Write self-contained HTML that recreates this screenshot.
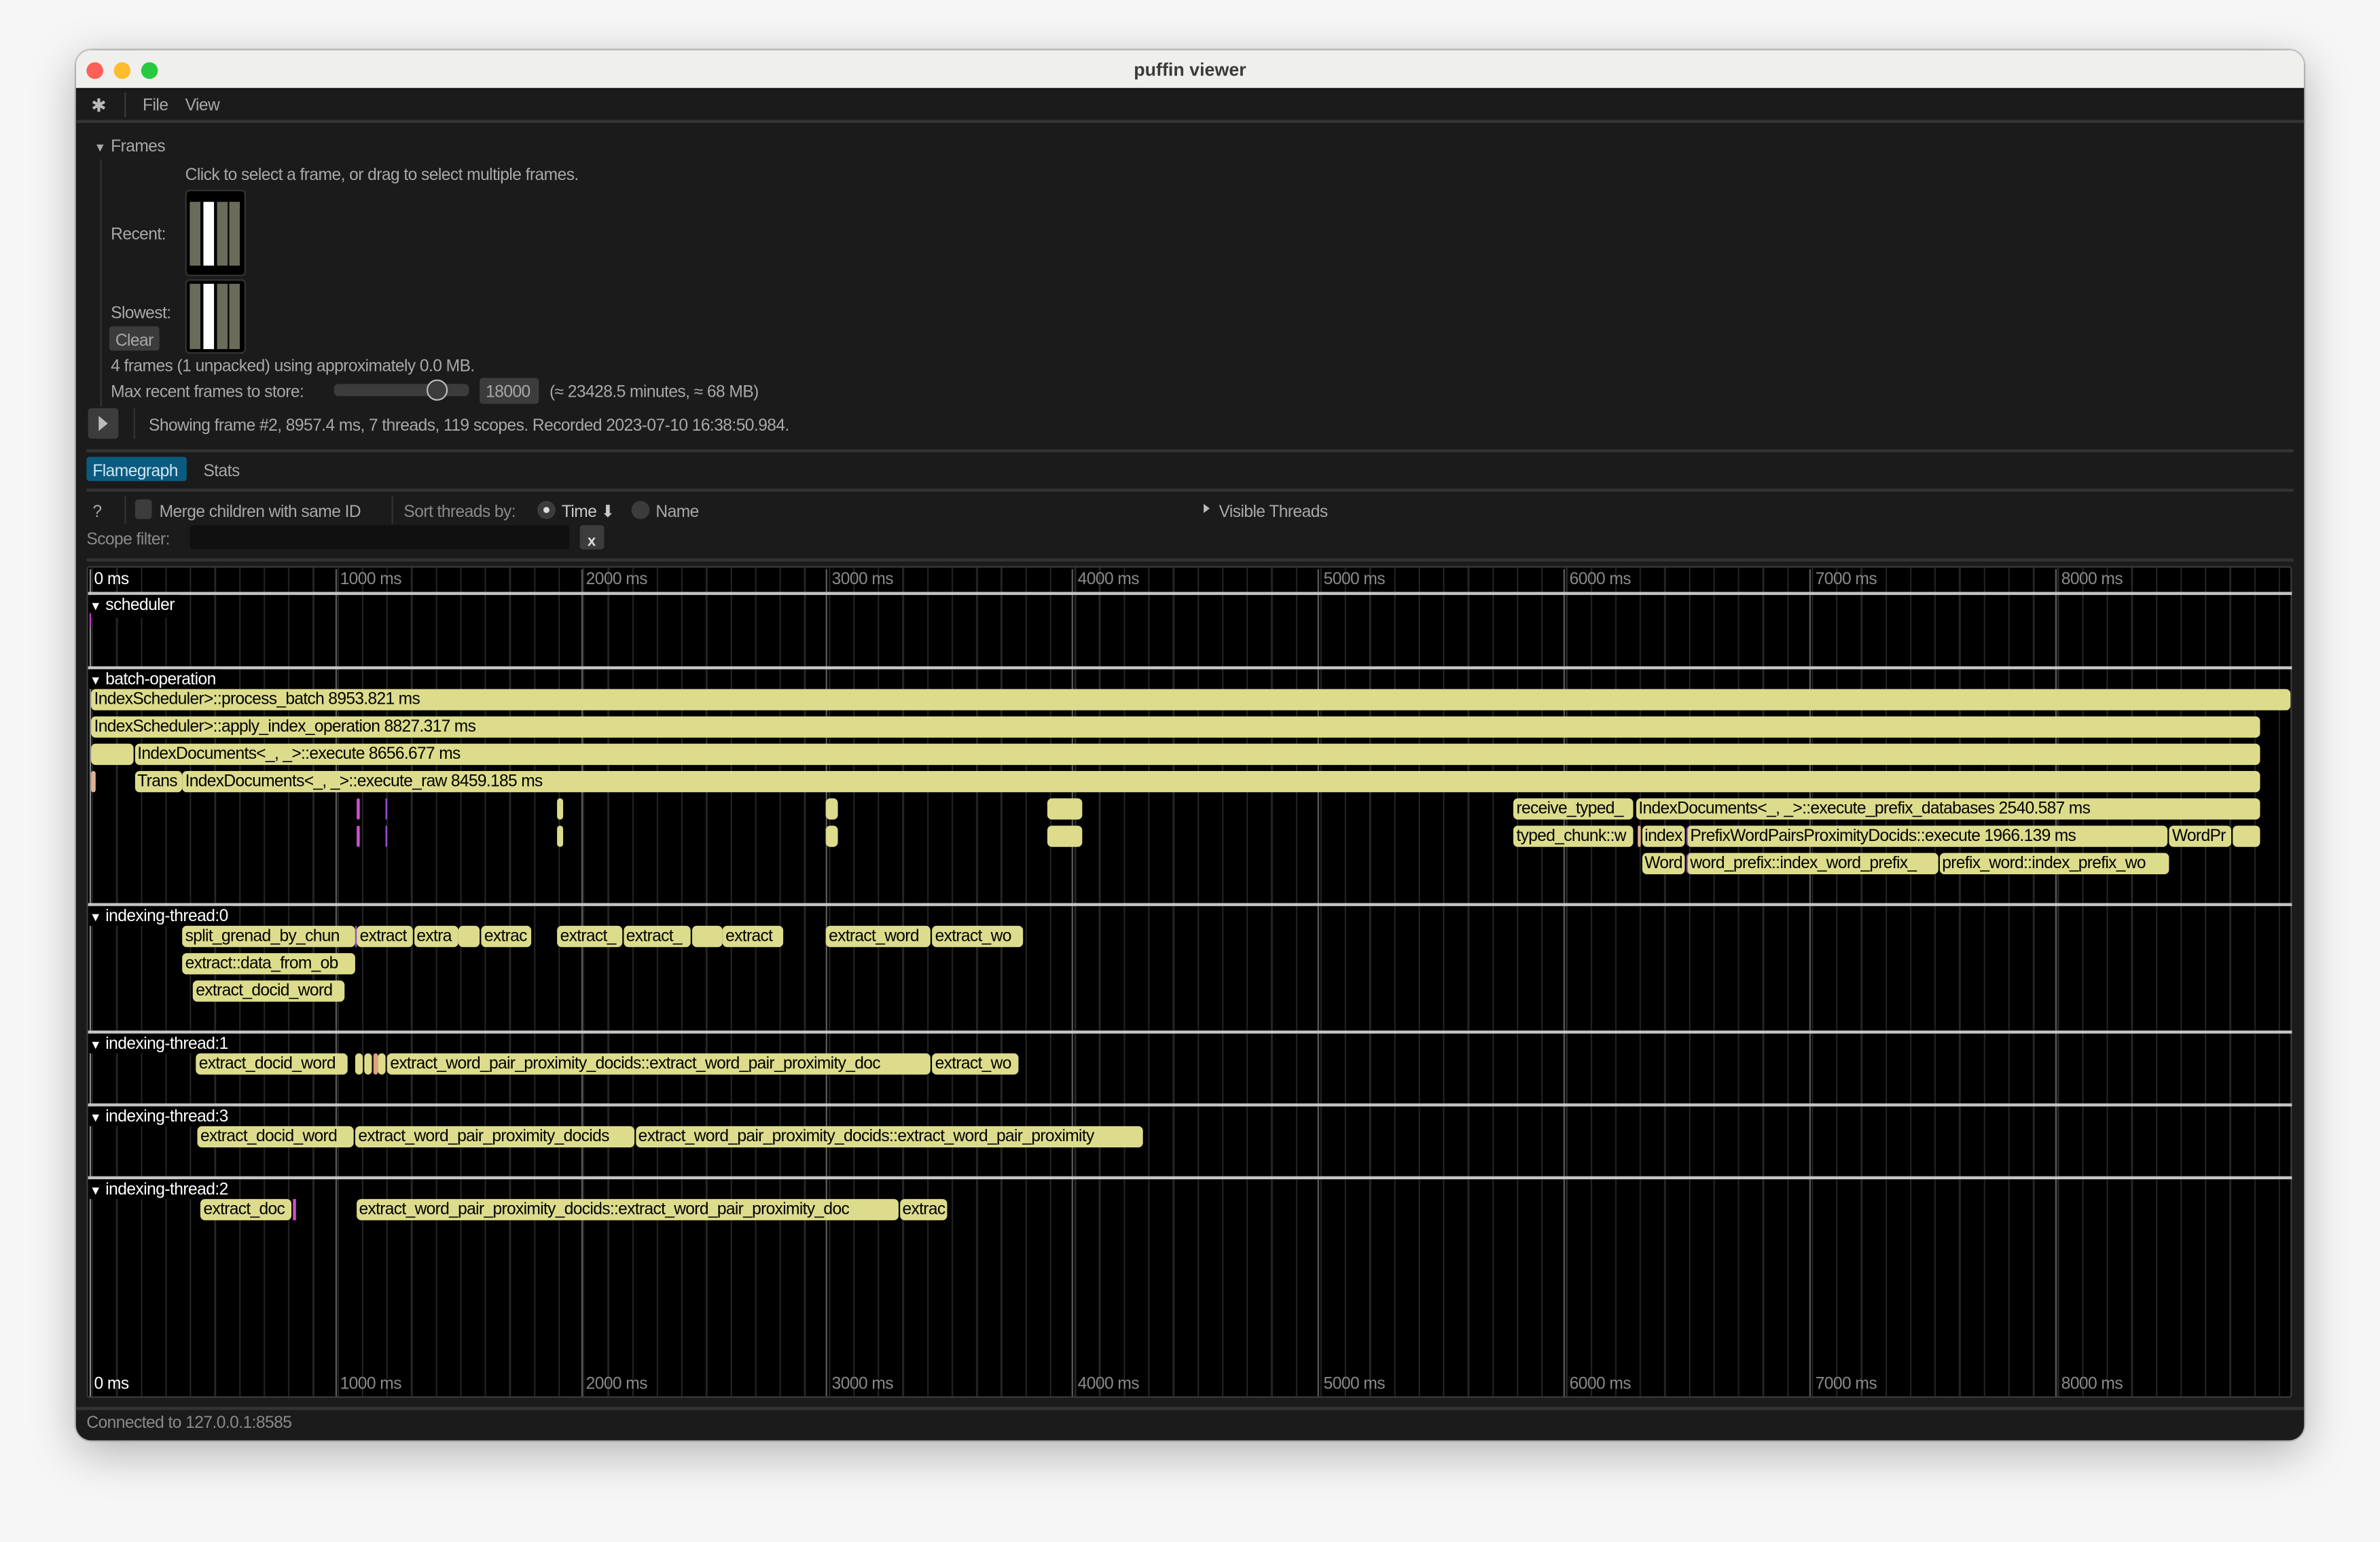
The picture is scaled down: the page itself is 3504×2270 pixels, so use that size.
<!DOCTYPE html>
<html><head><meta charset="utf-8"><style>
html,body{margin:0;padding:0;width:3504px;height:2270px;overflow:hidden;background:#f6f6f6}
#w{position:absolute;left:0;top:0;width:1568px;height:1016px;transform:scale(2.23469,2.2343);transform-origin:0 0;font-family:"Liberation Sans",sans-serif;font-size:11px;color:#a8a8a8}
.a{position:absolute;white-space:nowrap}
.win{position:absolute;left:50px;top:33px;width:1468px;height:916px;border-radius:10px;background:#1b1b1b;overflow:hidden;box-shadow:0 8px 30px rgba(0,0,0,.28),0 0 0 1px rgba(0,0,0,.15)}
.tb{position:absolute;left:0;top:0;width:1468px;height:25px;background:#efefed;border-bottom:1px solid #000}
.hl{position:absolute;height:1px;background:#3a3a3a}
.t{position:absolute;white-space:nowrap;line-height:13px;transform:translateY(-5.3px);letter-spacing:-.25px}
.b{position:absolute;height:14px;background:#dcdc8c;border-radius:3px;color:#000;font-size:11px;line-height:15px;padding-left:2px;overflow:hidden;white-space:nowrap;box-sizing:border-box;letter-spacing:-.3px}
.sep{position:absolute;left:58px;width:1452px;height:1.5px;background:#c4c4c4}
.ml{position:absolute;top:375px;width:1px;height:545px;background:#5a5a5a}
.lb{position:absolute;background:#000;color:#fff;height:13px;line-height:15px;padding-right:4px;letter-spacing:-.25px}
.ax{position:absolute;color:#8a8a8a;letter-spacing:-.25px;line-height:13px}
</style></head><body><div id="w">
<div class="win">
 <div class="tb">
  <div class="a" style="left:7px;top:8px;width:11px;height:11px;border-radius:50%;background:#fe5f57"></div>
  <div class="a" style="left:25px;top:8px;width:11px;height:11px;border-radius:50%;background:#febc2e"></div>
  <div class="a" style="left:43px;top:8px;width:11px;height:11px;border-radius:50%;background:#28c840"></div>
  <div class="a" style="left:0;width:1468px;top:6px;text-align:center;font-weight:bold;font-size:12px;color:#3a3a3a">puffin viewer</div>
 </div>
</div>
<div class="t" style="left:60px;top:69px;color:#bbb;font-size:12px">✱</div>
<div class="a" style="left:82px;top:61px;width:1px;height:16px;background:#3a3a3a"></div>
<div class="t" style="left:94px;top:69px">File</div>
<div class="t" style="left:122px;top:69px">View</div>
<div class="hl" style="left:50px;top:79px;width:1468px;height:1.5px;background:#333"></div>
<div class="t" style="left:62px;top:96px;font-size:8px">▼</div>
<div class="t" style="left:73px;top:96px">Frames</div>
<div class="a" style="left:66px;top:105px;width:1px;height:163px;background:#333"></div>
<div class="t" style="left:122px;top:115px">Click to select a frame, or drag to select multiple frames.</div>
<div class="t" style="left:73px;top:154px">Recent:</div>
<div class="a" style="left:123px;top:126px;width:38px;height:55px;background:#000;border-radius:2px;box-shadow:0 0 0 1px #333"></div>
<div class="a" style="left:125px;top:133px;width:7px;height:42px;background:#6b6b5a"></div>
<div class="a" style="left:134px;top:133px;width:7px;height:42px;background:#fff"></div>
<div class="a" style="left:143px;top:133px;width:7px;height:42px;background:#6b6b5a"></div>
<div class="a" style="left:151px;top:133px;width:7px;height:42px;background:#6b6b5a"></div>
<div class="t" style="left:73px;top:206px">Slowest:</div>
<div class="a" style="left:123px;top:185px;width:38px;height:47px;background:#000;border-radius:2px;box-shadow:0 0 0 1px #333"></div>
<div class="a" style="left:125px;top:187px;width:7px;height:43px;background:#6b6b5a"></div>
<div class="a" style="left:134px;top:187px;width:7px;height:43px;background:#fff"></div>
<div class="a" style="left:143px;top:187px;width:7px;height:43px;background:#6b6b5a"></div>
<div class="a" style="left:151px;top:187px;width:7px;height:43px;background:#6b6b5a"></div>
<div class="a" style="left:72px;top:215px;width:33px;height:16px;background:#3c3c3c;border-radius:2px"></div>
<div class="t" style="left:76px;top:224px">Clear</div>
<div class="t" style="left:73px;top:241px">4 frames (1 unpacked) using approximately 0.0 MB.</div>
<div class="t" style="left:73px;top:258px">Max recent frames to store:</div>
<div class="a" style="left:220px;top:253px;width:89px;height:8px;background:#3c3c3c;border-radius:3px"></div>
<div class="a" style="left:281px;top:250px;width:12px;height:12px;border-radius:50%;background:#3c3c3c;border:1px solid #bbb"></div>
<div class="a" style="left:316px;top:249px;width:39px;height:17px;background:#3c3c3c;border-radius:2px"></div>
<div class="t" style="left:320px;top:258px">18000</div>
<div class="t" style="left:362px;top:258px">(≈ 23428.5 minutes, ≈ 68 MB)</div>
<div class="a" style="left:58px;top:269px;width:20px;height:20px;background:#3c3c3c;border-radius:2px"></div>
<div class="a" style="left:65px;top:274px;width:0;height:0;border-left:6px solid #bbb;border-top:5px solid transparent;border-bottom:5px solid transparent"></div>
<div class="a" style="left:88px;top:269px;width:1px;height:20px;background:#333"></div>
<div class="t" style="left:98px;top:280px">Showing frame #2, 8957.4 ms, 7 threads, 119 scopes. Recorded 2023-07-10 16:38:50.984.</div>
<div class="hl" style="left:57px;top:296px;width:1454px;height:1.5px;background:#333"></div>
<div class="a" style="left:57px;top:301px;width:66px;height:16px;background:#0b5a80;border-radius:2px"></div>
<div class="t" style="left:61px;top:310px;color:#cfe6f3">Flamegraph</div>
<div class="t" style="left:134px;top:310px">Stats</div>
<div class="hl" style="left:57px;top:322px;width:1454px;height:1.5px;background:#333"></div>
<div class="t" style="left:61px;top:337px">?</div>
<div class="a" style="left:82px;top:327px;width:1px;height:18px;background:#333"></div>
<div class="a" style="left:89px;top:329px;width:11px;height:13px;background:#3c3c3c;border-radius:2px"></div>
<div class="t" style="left:105px;top:337px">Merge children with same ID</div>
<div class="a" style="left:258px;top:327px;width:1px;height:18px;background:#333"></div>
<div class="t" style="left:266px;top:337px;color:#8a8a8a">Sort threads by:</div>
<div class="a" style="left:354px;top:330px;width:12px;height:12px;border-radius:50%;background:#3c3c3c"></div>
<div class="a" style="left:358px;top:334px;width:4px;height:4px;border-radius:50%;background:#ddd"></div>
<div class="t" style="left:370px;top:337px;color:#c8c8c8">Time ⬇</div>
<div class="a" style="left:416px;top:330px;width:12px;height:12px;border-radius:50%;background:#3c3c3c"></div>
<div class="t" style="left:432px;top:337px">Name</div>
<div class="a" style="left:793px;top:332px;width:0;height:0;border-left:4px solid #bbb;border-top:3px solid transparent;border-bottom:3px solid transparent"></div>
<div class="t" style="left:803px;top:337px">Visible Threads</div>
<div class="t" style="left:57px;top:355px;color:#8a8a8a">Scope filter:</div>
<div class="a" style="left:125px;top:346px;width:250px;height:16px;background:#101010;border-radius:2px"></div>
<div class="a" style="left:382px;top:346px;width:16px;height:16px;background:#3c3c3c;border-radius:2px"></div>
<div class="t" style="left:387px;top:356px;color:#ddd;font-weight:bold;font-size:10px">x</div>
<div class="hl" style="left:57px;top:368px;width:1454px;height:1.5px;background:#333"></div>
<div class="a" style="left:57px;top:373px;width:1453px;height:548px;background:#000;border:1px solid #3a3a3a;border-radius:2px;box-sizing:border-box;background-image:repeating-linear-gradient(to right,#262626 0 1px,transparent 1px 16.19px);background-position:2.3px 0"></div>
<div class="ml" style="left:59.3px;background:#888"></div><div class="ml" style="left:220.7px"></div><div class="ml" style="left:382.5px"></div><div class="ml" style="left:544.4px"></div><div class="ml" style="left:706.3px"></div><div class="ml" style="left:868.2px"></div><div class="ml" style="left:1030px"></div><div class="ml" style="left:1192px"></div><div class="ml" style="left:1354px"></div>
<div class="ax" style="left:62px;top:376px;color:#fff">0 ms</div>
<div class="ax" style="left:224px;top:376px">1000 ms</div><div class="ax" style="left:386px;top:376px">2000 ms</div><div class="ax" style="left:548px;top:376px">3000 ms</div><div class="ax" style="left:710px;top:376px">4000 ms</div><div class="ax" style="left:872px;top:376px">5000 ms</div><div class="ax" style="left:1034px;top:376px">6000 ms</div><div class="ax" style="left:1196px;top:376px">7000 ms</div><div class="ax" style="left:1358px;top:376px">8000 ms</div>
<div class="ax" style="left:62px;top:906px;color:#fff">0 ms</div>
<div class="ax" style="left:224px;top:906px">1000 ms</div><div class="ax" style="left:386px;top:906px">2000 ms</div><div class="ax" style="left:548px;top:906px">3000 ms</div><div class="ax" style="left:710px;top:906px">4000 ms</div><div class="ax" style="left:872px;top:906px">5000 ms</div><div class="ax" style="left:1034px;top:906px">6000 ms</div><div class="ax" style="left:1196px;top:906px">7000 ms</div><div class="ax" style="left:1358px;top:906px">8000 ms</div>
<div class="sep" style="top:390px"></div><div class="sep" style="top:439px"></div><div class="sep" style="top:595px"></div><div class="sep" style="top:679px"></div><div class="sep" style="top:727px"></div><div class="sep" style="top:775px"></div>
<div class="lb" style="left:59px;top:392px;height:15px"><span style="font-size:8px">▼</span> scheduler</div>
<div class="a" style="left:59px;top:404px;width:1px;height:9px;background:#c040c0"></div>
<div class="lb" style="left:59px;top:441px"><span style="font-size:8px">▼</span> batch-operation</div>
<div class="lb" style="left:59px;top:597px"><span style="font-size:8px">▼</span> indexing-thread:0</div>
<div class="lb" style="left:59px;top:681px"><span style="font-size:8px">▼</span> indexing-thread:1</div>
<div class="lb" style="left:59px;top:729px"><span style="font-size:8px">▼</span> indexing-thread:3</div>
<div class="lb" style="left:59px;top:777px"><span style="font-size:8px">▼</span> indexing-thread:2</div>
<div class="b" style="left:60px;top:454px;width:1449px">IndexScheduler&gt;::process_batch 8953.821 ms</div>
<div class="b" style="left:60px;top:472px;width:1429px">IndexScheduler&gt;::apply_index_operation 8827.317 ms</div>
<div class="b" style="left:60px;top:490px;width:28px"></div>
<div class="b" style="left:88.5px;top:490px;width:1400.5px">IndexDocuments&lt;_, _&gt;::execute 8656.677 ms</div>
<div class="b" style="left:60px;top:508px;width:3px;background:#e0b090;padding:0"></div>
<div class="b" style="left:88.5px;top:508px;width:31px">Trans</div>
<div class="b" style="left:120px;top:508px;width:1369px">IndexDocuments&lt;_, _&gt;::execute_raw 8459.185 ms</div>
<div class="b" style="left:234.5px;top:526px;width:2.5px;background:#d050d0;padding:0;border-radius:1px"></div>
<div class="b" style="left:253.5px;top:526px;width:1px;background:#a050e0;padding:0"></div>
<div class="b" style="left:367px;top:526px;width:4px;padding:0"></div>
<div class="b" style="left:544px;top:526px;width:8px;padding:0"></div>
<div class="b" style="left:690px;top:526px;width:23px;padding:0"></div>
<div class="b" style="left:997px;top:526px;width:79px">receive_typed_</div>
<div class="b" style="left:1077.5px;top:526px;width:411.5px">IndexDocuments&lt;_, _&gt;::execute_prefix_databases 2540.587 ms</div>
<div class="b" style="left:234.5px;top:544px;width:2.5px;background:#d050d0;padding:0;border-radius:1px"></div>
<div class="b" style="left:253.5px;top:544px;width:1px;background:#a050e0;padding:0"></div>
<div class="b" style="left:367px;top:544px;width:4px;padding:0"></div>
<div class="b" style="left:544px;top:544px;width:8px;padding:0"></div>
<div class="b" style="left:690px;top:544px;width:23px;padding:0"></div>
<div class="b" style="left:997px;top:544px;width:79px">typed_chunk::w</div>
<div class="b" style="left:1078.5px;top:544px;width:2.5px;background:#e0b090;padding:0"></div>
<div class="b" style="left:1081.5px;top:544px;width:28px">index</div>
<div class="b" style="left:1110.5px;top:544px;width:317px;border-left:1px solid #a050e0">PrefixWordPairsProximityDocids::execute 1966.139 ms</div>
<div class="b" style="left:1429px;top:544px;width:41px">WordPr</div>
<div class="b" style="left:1471px;top:544px;width:18px"></div>
<div class="b" style="left:1081.5px;top:562px;width:28px">Word</div>
<div class="b" style="left:1110.5px;top:562px;width:166px;border-left:1px solid #a050e0">word_prefix::index_word_prefix_</div>
<div class="b" style="left:1277.5px;top:562px;width:151px">prefix_word::index_prefix_wo</div>
<div class="b" style="left:120px;top:610px;width:114px">split_grenad_by_chun</div>
<div class="a" style="left:234px;top:610px;width:1px;height:14px;background:#a050e0"></div>
<div class="b" style="left:235px;top:610px;width:37px">extract</div>
<div class="b" style="left:272.5px;top:610px;width:29px">extra</div>
<div class="b" style="left:302px;top:610px;width:14px"></div>
<div class="b" style="left:317px;top:610px;width:33px">extrac</div>
<div class="b" style="left:367px;top:610px;width:43px">extract_</div>
<div class="b" style="left:410.5px;top:610px;width:44.5px">extract_</div>
<div class="b" style="left:456px;top:610px;width:19.5px"></div>
<div class="b" style="left:476px;top:610px;width:40px">extract</div>
<div class="b" style="left:544px;top:610px;width:69px">extract_word</div>
<div class="b" style="left:614px;top:610px;width:60px">extract_wo</div>
<div class="b" style="left:120px;top:628px;width:114px">extract::data_from_ob</div>
<div class="b" style="left:127px;top:646px;width:100px">extract_docid_word</div>
<div class="b" style="left:129px;top:694px;width:100px">extract_docid_word</div>
<div class="b" style="left:234px;top:694px;width:5px;padding:0"></div>
<div class="b" style="left:240px;top:694px;width:5px;padding:0"></div>
<div class="b" style="left:245.5px;top:694px;width:3px;background:#e0a080;padding:0"></div>
<div class="b" style="left:249px;top:694px;width:5px;padding:0"></div>
<div class="b" style="left:255px;top:694px;width:358px">extract_word_pair_proximity_docids::extract_word_pair_proximity_doc</div>
<div class="b" style="left:614px;top:694px;width:57px">extract_wo</div>
<div class="b" style="left:130px;top:742px;width:103px">extract_docid_word</div>
<div class="b" style="left:234px;top:742px;width:184px">extract_word_pair_proximity_docids</div>
<div class="b" style="left:418.5px;top:742px;width:334px">extract_word_pair_proximity_docids::extract_word_pair_proximity</div>
<div class="b" style="left:132px;top:790px;width:60px">extract_doc</div>
<div class="a" style="left:192.5px;top:790px;width:2px;height:14px;background:#d050d0"></div>
<div class="b" style="left:234.5px;top:790px;width:357px">extract_word_pair_proximity_docids::extract_word_pair_proximity_doc</div>
<div class="b" style="left:592.5px;top:790px;width:31px">extrac</div>
<div class="hl" style="left:50px;top:927px;width:1468px;height:1.5px;background:#333"></div>
<div class="t" style="left:57px;top:937px;color:#8a8a8a">Connected to 127.0.0.1:8585</div>
</div></body></html>
